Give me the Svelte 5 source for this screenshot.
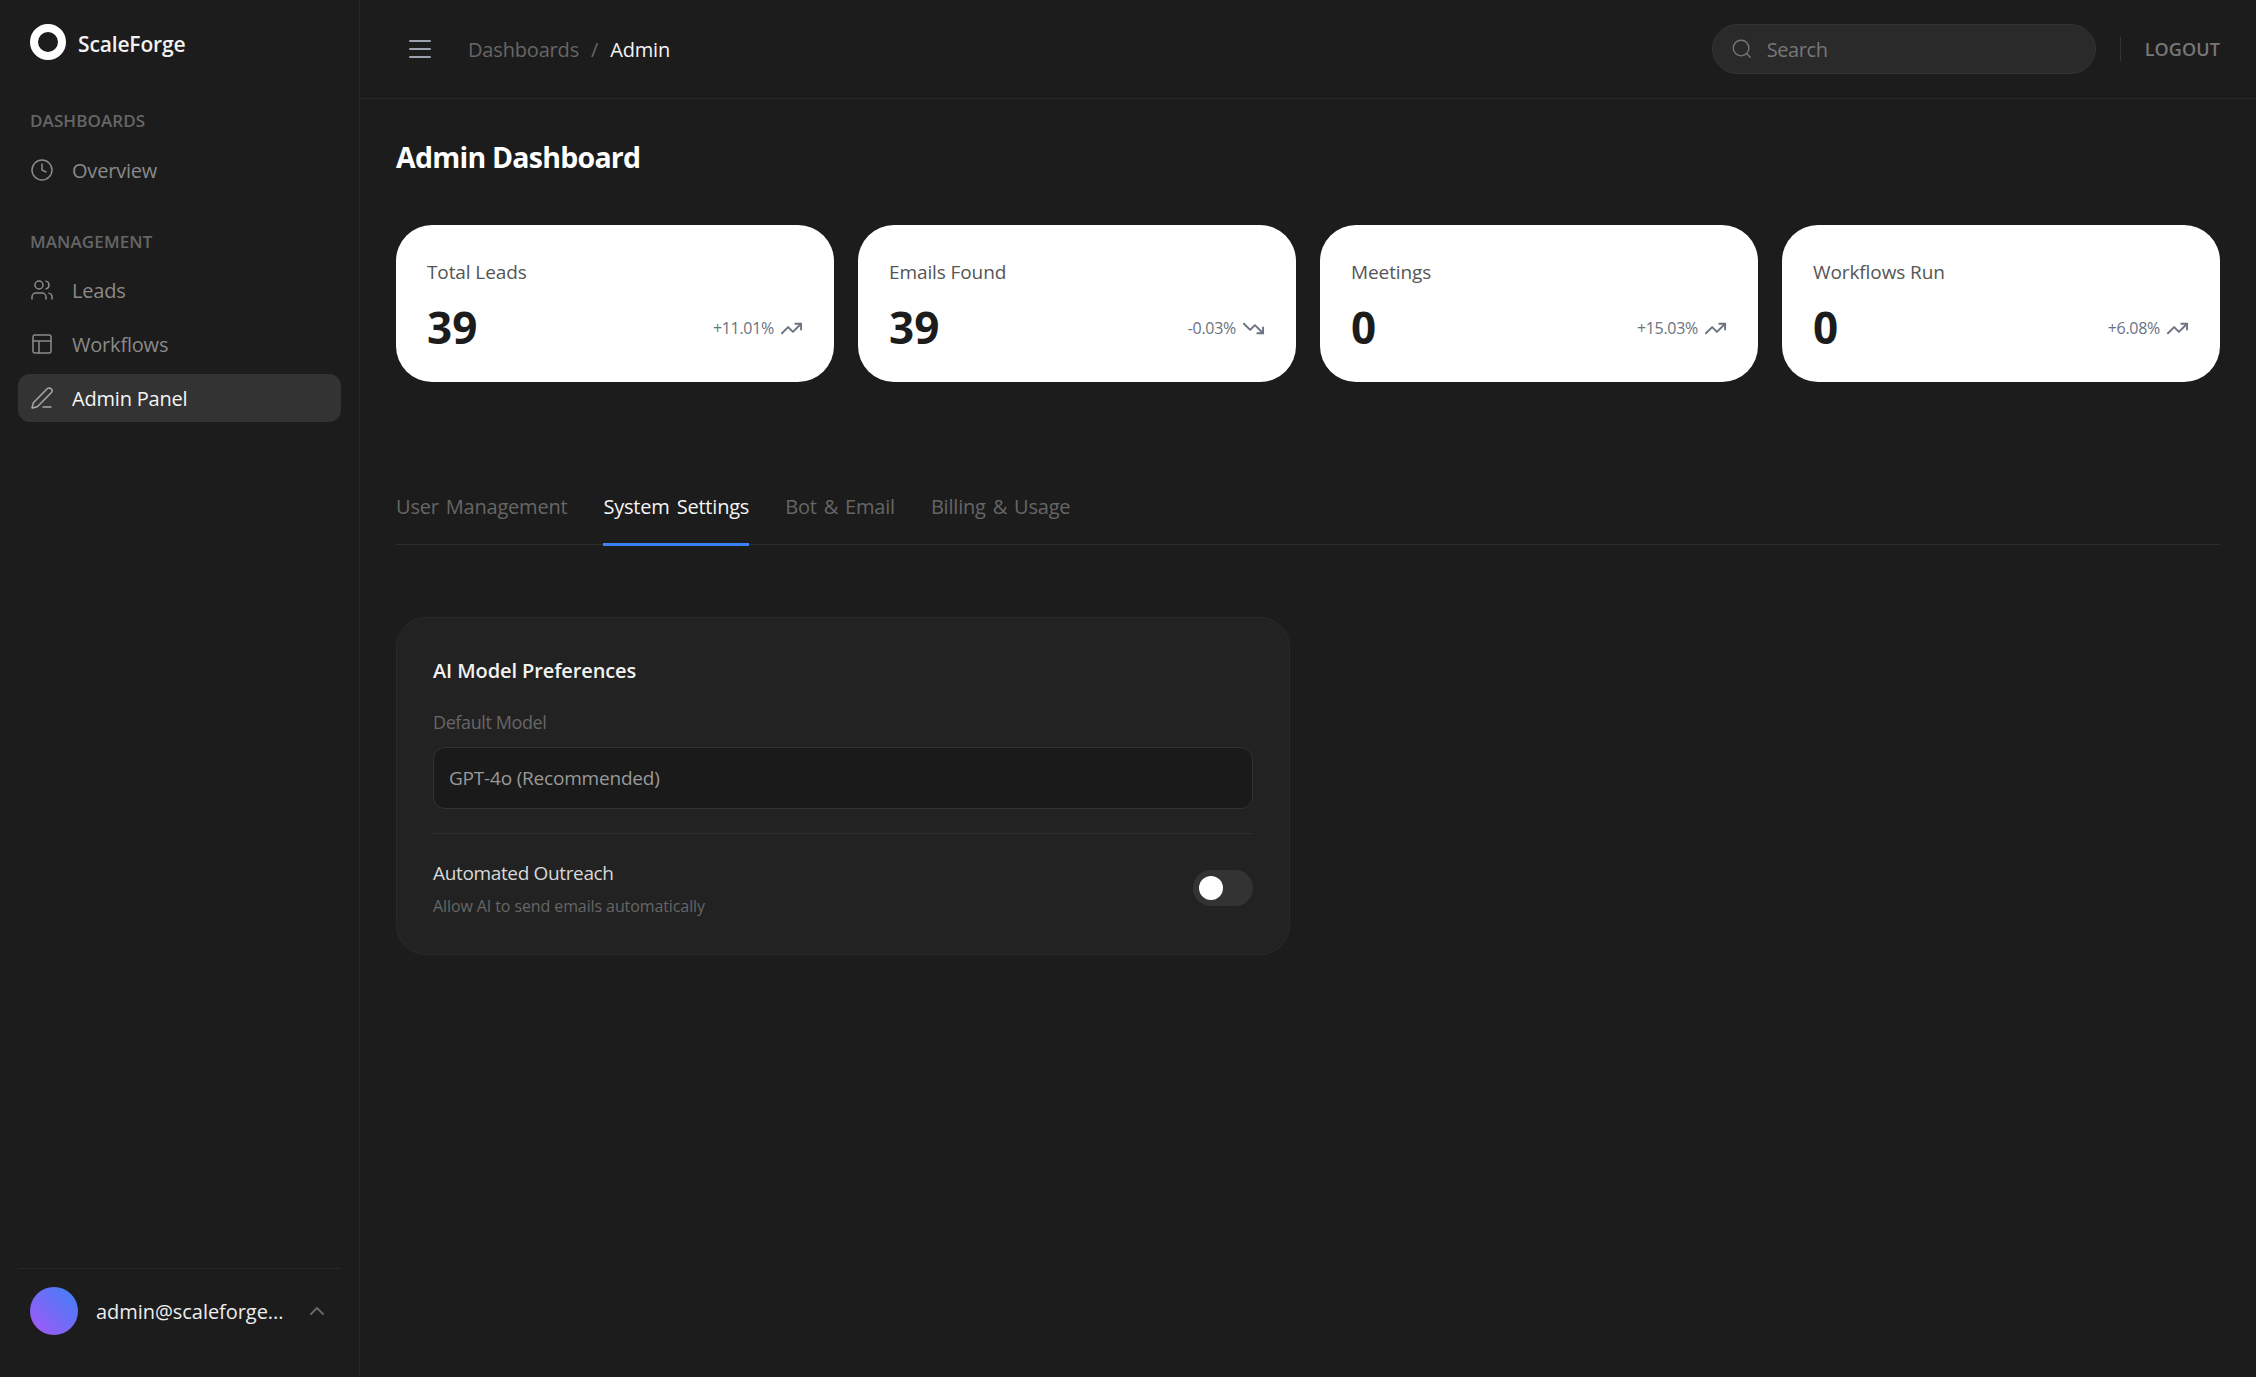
<script lang="ts">
	// Static data for the dashboard page
	const stats = [
		{ label: 'Total Leads', value: '39', delta: '+11.01%', up: true },
		{ label: 'Emails Found', value: '39', delta: '-0.03%', up: false },
		{ label: 'Meetings', value: '0', delta: '+15.03%', up: true },
		{ label: 'Workflows Run', value: '0', delta: '+6.08%', up: true }
	];

	const tabs = ['User Management', 'System Settings', 'Bot & Email', 'Billing & Usage'];

	let activeTab = $state('System Settings');
	let outreach = $state(false);
</script>

<div class="shell">
	<aside class="sidebar">
		<div class="brand">
			<span class="brand-mark"></span>
			<span class="brand-name">ScaleForge</span>
		</div>

		<nav class="nav">
			<div class="nav-title first">DASHBOARDS</div>
			<a class="nav-item lead-1" href="#overview">
				<svg viewBox="0 0 24 24"><circle cx="12" cy="12" r="10" /><path d="M12 6v6l4 2" /></svg>
				<span>Overview</span>
			</a>

			<div class="nav-title second">MANAGEMENT</div>
			<a class="nav-item lead-2" href="#leads">
				<svg viewBox="0 0 24 24">
					<path d="M16 21v-2a4 4 0 0 0-4-4H6a4 4 0 0 0-4 4v2" />
					<circle cx="9" cy="7" r="4" />
					<path d="M22 21v-2a4 4 0 0 0-3-3.87" />
					<path d="M16 3.13a4 4 0 0 1 0 7.75" />
				</svg>
				<span>Leads</span>
			</a>
			<a class="nav-item" href="#workflows">
				<svg viewBox="0 0 24 24"><rect x="3" y="3" width="18" height="18" rx="2" /><path d="M3 9h18M9 21V9" /></svg>
				<span>Workflows</span>
			</a>
			<a class="nav-item active" href="#admin">
				<svg viewBox="0 0 24 24">
					<path d="M13 21h8" />
					<path d="M21.174 6.812a1 1 0 0 0-3.986-3.987L3.842 16.174a2 2 0 0 0-.5.83l-1.321 4.352a.5.5 0 0 0 .623.622l4.353-1.32a2 2 0 0 0 .83-.497z" />
				</svg>
				<span>Admin Panel</span>
			</a>
		</nav>

		<div class="user">
			<span class="avatar"></span>
			<span class="user-email">admin@scaleforge...</span>
			<svg class="chevron" viewBox="0 0 24 24"><path d="m6 15 6-6 6 6" /></svg>
		</div>
	</aside>

	<div class="main">
		<header class="topbar">
			<button class="menu-btn" aria-label="Toggle menu">
				<svg viewBox="0 0 24 24"><path d="M2 4h20M2 12h20M2 20h20" /></svg>
			</button>
			<div class="crumbs">
				<span class="crumb-muted">Dashboards</span>
				<span class="crumb-sep">/</span>
				<span class="crumb-current">Admin</span>
			</div>
			<div class="search">
				<svg viewBox="0 0 24 24"><circle cx="11" cy="11" r="8.5" /><path d="m21 21-3.8-3.8" /></svg>
				<span>Search</span>
			</div>
			<span class="top-sep"></span>
			<button class="logout">LOGOUT</button>
		</header>

		<main class="content">
			<h1>Admin Dashboard</h1>

			<div class="stats">
				{#each stats as stat}
					<div class="stat-card">
						<div class="stat-label">{stat.label}</div>
						<div class="stat-row">
							<div class="stat-value">{stat.value}</div>
							<div class="stat-delta">
								<span>{stat.delta}</span>
								{#if stat.up}
									<svg viewBox="0 0 24 24"><path d="M22 7l-8.5 8.5-5-5L2 17" /><path d="M16 7h6v6" /></svg>
								{:else}
									<svg viewBox="0 0 24 24"><path d="M22 17l-8.5-8.5-5 5L2 7" /><path d="M16 17h6v-6" /></svg>
								{/if}
							</div>
						</div>
					</div>
				{/each}
			</div>

			<div class="tabs">
				{#each tabs as tab}
					<button class="tab" class:active={activeTab === tab} onclick={() => (activeTab = tab)}>{tab}</button>
				{/each}
			</div>

			<div class="settings-grid">
				<section class="panel">
					<h2>AI Model Preferences</h2>
					<div class="field-label">Default Model</div>
					<div class="select">GPT-4o (Recommended)</div>
					<div class="toggle-row">
						<div>
							<div class="toggle-title">Automated Outreach</div>
							<div class="toggle-desc">Allow AI to send emails automatically</div>
						</div>
						<button class="toggle" class:on={outreach} aria-label="Automated Outreach" onclick={() => (outreach = !outreach)}>
							<span class="knob"></span>
						</button>
					</div>
				</section>
			</div>
		</main>
	</div>
</div>

<style>
	:global(body) {
		background: #1c1c1c;
		font-family: 'Open Sans', 'Noto Sans', sans-serif;
		color: #fff;
	}

	.shell {
		display: flex;
		min-height: 1377px;
	}

	svg {
		fill: none;
		stroke: currentColor;
		stroke-width: 1.5;
		stroke-linecap: round;
		stroke-linejoin: round;
		flex-shrink: 0;
	}

	button {
		background: none;
		border: 0;
		padding: 0;
		font: inherit;
		color: inherit;
	}

	/* Sidebar */
	.sidebar {
		width: 360px;
		box-sizing: border-box;
		border-right: 1px solid #272727;
		padding: 0 18px;
		display: flex;
		flex-direction: column;
	}

	.brand {
		display: flex;
		align-items: center;
		gap: 12px;
		padding: 24px 12px 0;
		height: 36px;
	}

	.brand-mark {
		width: 36px;
		height: 36px;
		box-sizing: border-box;
		border-radius: 50%;
		border: 8px solid #fff;
		background: #1c1c1c;
	}

	.brand-name {
		font-size: 21px;
		font-weight: 600;
		letter-spacing: -0.15px;
		color: #f2f2f2;
		margin-top: 3px;
	}

	.nav {
		flex: 1;
	}

	.nav-title {
		font-size: 17px;
		font-weight: 600;
		letter-spacing: 0.1px;
		color: #666;
		padding-left: 12px;
		line-height: 24px;
	}

	.nav-title.first {
		margin-top: 49px;
	}

	.nav-title.second {
		margin-top: 36px;
	}

	.nav-item {
		display: flex;
		align-items: center;
		gap: 18px;
		height: 48px;
		margin-top: 6px;
		padding: 0 12px;
		border-radius: 12px;
		color: #8a8a8a;
		font-size: 20px;
		letter-spacing: -0.2px;
		text-decoration: none;
	}

	.nav-item.lead-1 {
		margin-top: 13px;
	}

	.nav-item.lead-2 {
		margin-top: 12px;
	}

	.nav-item svg {
		width: 24px;
		height: 24px;
	}

	.nav-item.active {
		background: #333;
		color: #f5f5f5;
	}

	.nav-item.active svg {
		color: #a8a8a8;
	}

	.user {
		border-top: 1px solid #272727;
		height: 109px;
		box-sizing: border-box;
		padding: 18px 12px 42px;
		display: flex;
		align-items: center;
		gap: 18px;
	}

	.avatar {
		width: 48px;
		height: 48px;
		border-radius: 50%;
		flex-shrink: 0;
		background: linear-gradient(to top right, #a855f7, #3b82f6);
	}

	.user-email {
		font-size: 20px;
		letter-spacing: -0.05px;
		color: #ededed;
		white-space: nowrap;
	}

	.chevron {
		width: 24px;
		height: 24px;
		color: #666;
		stroke-width: 2;
		margin-left: auto;
	}

	/* Top bar */
	.main {
		flex: 1;
		min-width: 0;
	}

	.topbar {
		height: 99px;
		box-sizing: border-box;
		border-bottom: 1px solid #272727;
		display: flex;
		align-items: center;
		padding: 0 36px 0 48px;
	}

	.menu-btn {
		width: 24px;
		height: 24px;
		color: #9ca3af;
		display: flex;
	}

	.menu-btn svg {
		width: 24px;
		height: 24px;
		stroke-width: 2;
	}

	.crumbs {
		display: flex;
		gap: 12px;
		margin-left: 36px;
		margin-top: 1px;
		font-size: 20px;
		letter-spacing: -0.17px;
	}

	.crumb-muted {
		color: #666;
	}

	.crumb-sep {
		color: #666;
	}

	.crumb-current {
		color: #f5f5f5;
	}

	.search {
		margin-left: auto;
		width: 384px;
		height: 50px;
		box-sizing: border-box;
		border-radius: 25px;
		background: #2a2a2a;
		border: 1px solid #333;
		display: flex;
		align-items: center;
		gap: 14px;
		padding-left: 18px;
		color: #777;
		font-size: 20px;
		letter-spacing: -0.4px;
	}

	.search svg {
		width: 22px;
		height: 22px;
	}

	.search span {
		margin-top: 1px;
	}

	.top-sep {
		width: 1px;
		height: 24px;
		background: #333;
		margin: 0 24px;
	}

	.logout {
		font-size: 18px;
		font-weight: 600;
		color: #777;
		letter-spacing: 0.1px;
	}

	/* Content */
	.content {
		padding: 0 36px;
	}

	h1 {
		margin: 0;
		padding-top: 38px;
		font-size: 28.5px;
		line-height: 40px;
		font-weight: 700;
		letter-spacing: -0.75px;
		color: #fff;
	}

	.stats {
		display: grid;
		grid-template-columns: repeat(4, 1fr);
		gap: 24px;
		margin-top: 48px;
	}

	.stat-card {
		background: #fff;
		border-radius: 36px;
		height: 157px;
		box-sizing: border-box;
		padding: 32px 31px 0;
	}

	.stat-label {
		font-size: 19px;
		line-height: 30px;
		letter-spacing: -0.1px;
		color: #555;
	}

	.stat-row {
		display: flex;
		align-items: center;
		justify-content: space-between;
		margin-top: 10px;
	}

	.stat-value {
		font-size: 44px;
		font-weight: 700;
		line-height: 60px;
		color: #1c1c1c;
	}

	.stat-delta {
		display: flex;
		align-items: center;
		gap: 6px;
		margin-top: 2px;
		font-size: 16px;
		letter-spacing: -0.3px;
		color: #6b7280;
	}

	.stat-delta svg {
		width: 23px;
		height: 23px;
		stroke-width: 2;
	}

	.tabs {
		display: flex;
		gap: 36px;
		margin-top: 72px;
		height: 91px;
		box-sizing: border-box;
		border-bottom: 1px solid #2e2e2e;
	}

	.tab {
		height: 92px;
		flex-shrink: 0;
		box-sizing: border-box;
		padding-top: 15px;
		font-size: 20px;
		letter-spacing: -0.2px;
		word-spacing: 2px;
		color: #666;
		border-bottom: 3px solid transparent;
		cursor: pointer;
	}

	.tab.active {
		color: #f5f5f5;
		border-bottom-color: #3b82f6;
	}

	.settings-grid {
		display: grid;
		grid-template-columns: 1fr 1fr;
		gap: 36px;
		margin-top: 72px;
	}

	.panel {
		background: #222;
		border: 1px solid #2a2a2a;
		border-radius: 30px;
		padding: 36px;
		height: 338px;
		box-sizing: border-box;
	}

	h2 {
		margin: 0;
		font-size: 20px;
		line-height: 34px;
		font-weight: 600;
		letter-spacing: -0.1px;
		color: #f2f2f2;
	}

	.field-label {
		margin-top: 20px;
		font-size: 18px;
		line-height: 28px;
		letter-spacing: -0.4px;
		color: #666;
	}

	.select {
		margin-top: 11px;
		height: 62px;
		box-sizing: border-box;
		background: #1a1a1a;
		border: 1px solid #333;
		border-radius: 12px;
		padding-left: 15px;
		display: flex;
		align-items: center;
		font-size: 19px;
		letter-spacing: -0.2px;
		color: #999;
	}

	.toggle-row {
		margin-top: 24px;
		padding-top: 25px;
		border-top: 1px solid #2e2e2e;
		display: flex;
		align-items: center;
		justify-content: space-between;
	}

	.toggle-title {
		font-size: 19px;
		line-height: 28px;
		letter-spacing: -0.35px;
		color: #d8d8d8;
	}

	.toggle-desc {
		margin-top: 7px;
		font-size: 16px;
		line-height: 24px;
		letter-spacing: -0.1px;
		color: #666;
	}

	.toggle {
		width: 60px;
		height: 36px;
		margin-bottom: 2px;
		border-radius: 18px;
		background: #333;
		padding: 6px;
		display: flex;
	}

	.knob {
		width: 24px;
		height: 24px;
		border-radius: 50%;
		background: #fff;
	}

	.toggle.on {
		background: #3b82f6;
		justify-content: flex-end;
	}
</style>
